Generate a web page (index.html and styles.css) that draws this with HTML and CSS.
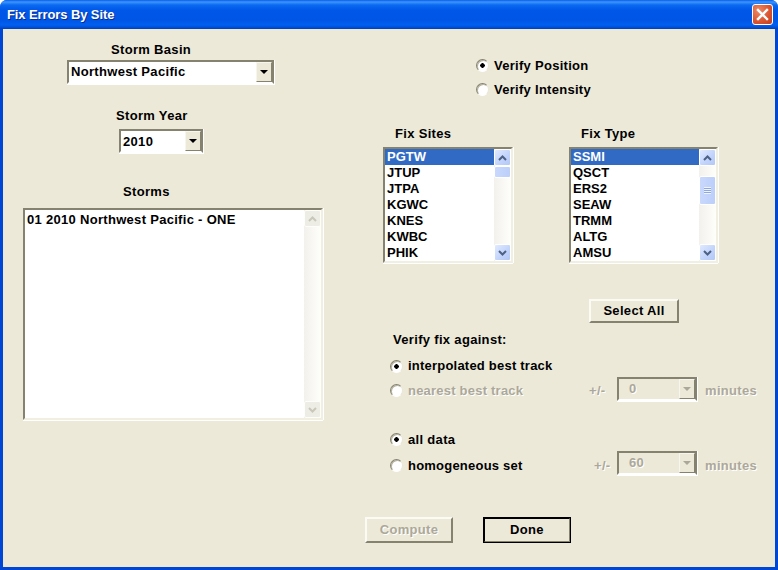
FILE: index.html
```html
<!DOCTYPE html>
<html lang="en">
<head>
<meta charset="utf-8">
<title>Fix Errors By Site</title>
<link rel="stylesheet" href="styles.css">
</head>
<body>
<div class="window">
  <div class="titlebar">
    <span class="title">Fix Errors By Site</span>
    <span class="close"><svg width="13" height="13" viewBox="0 0 13 13"><path d="M2 2 L11 11 M11 2 L2 11" stroke="#fff" stroke-width="2.4" stroke-linecap="square" fill="none"/></svg></span>
  </div>
  <div class="client">
    <div class="left">
      <div class="label basin-label">Storm Basin</div>
      <div class="combo basin"><span class="combo-text">Northwest Pacific</span><span class="combo-btn"><i class="arrow"></i></span></div>
      <div class="label year-label">Storm Year</div>
      <div class="combo year"><span class="combo-text">2010</span><span class="combo-btn"><i class="arrow"></i></span></div>
      <div class="label storms-label">Storms</div>
      <div class="listbox storms">
        <div class="items"><div class="item">01 2010 Northwest Pacific - ONE</div></div>
        <div class="scrollbar off">
          <span class="sb-btn"><svg width="9" height="6" viewBox="0 0 9 6"><path d="M1 5 L4.500 1.500 L8 5" fill="none" stroke="#c9c7ba" stroke-width="2"/></svg></span>
          <span class="sb-track"></span>
          <span class="sb-btn"><svg width="9" height="6" viewBox="0 0 9 6"><path d="M1 1 L4.500 4.500 L8 1" fill="none" stroke="#c9c7ba" stroke-width="2"/></svg></span>
        </div>
      </div>
    </div>
    <div class="right">
      <div class="radio-row verify first"><i class="radio on"></i><span class="label verify-text">Verify Position</span></div>
      <div class="radio-row verify"><i class="radio"></i><span class="label verify-text">Verify Intensity</span></div>
      <div class="lists">
        <div class="list-col sites">
          <div class="label list-label">Fix Sites</div>
          <div class="listbox small">
            <div class="items">
              <div class="item sel">PGTW</div><div class="item">JTUP</div><div class="item">JTPA</div><div class="item">KGWC</div><div class="item">KNES</div><div class="item">KWBC</div><div class="item">PHIK</div>
            </div>
            <div class="scrollbar">
              <span class="sb-btn"><svg width="9" height="6" viewBox="0 0 9 6"><path d="M1 5 L4.500 1.500 L8 5" fill="none" stroke="#4d6185" stroke-width="2"/></svg></span>
              <span class="sb-track"><span class="thumb thumb-top"></span></span>
              <span class="sb-btn"><svg width="9" height="6" viewBox="0 0 9 6"><path d="M1 1 L4.500 4.500 L8 1" fill="none" stroke="#4d6185" stroke-width="2"/></svg></span>
            </div>
          </div>
        </div>
        <div class="list-col types">
          <div class="label list-label">Fix Type</div>
          <div class="listbox small">
            <div class="items">
              <div class="item sel">SSMI</div><div class="item">QSCT</div><div class="item">ERS2</div><div class="item">SEAW</div><div class="item">TRMM</div><div class="item">ALTG</div><div class="item">AMSU</div>
            </div>
            <div class="scrollbar">
              <span class="sb-btn"><svg width="9" height="6" viewBox="0 0 9 6"><path d="M1 5 L4.500 1.500 L8 5" fill="none" stroke="#4d6185" stroke-width="2"/></svg></span>
              <span class="sb-track"><span class="thumb thumb-mid"><i class="grip"></i></span></span>
              <span class="sb-btn"><svg width="9" height="6" viewBox="0 0 9 6"><path d="M1 1 L4.500 4.500 L8 1" fill="none" stroke="#4d6185" stroke-width="2"/></svg></span>
            </div>
          </div>
        </div>
      </div>
      <button class="btn select-all">Select All</button>
      <div class="label against">Verify fix against:</div>
      <div class="opt-row r1"><i class="radio on"></i><span class="label tight">interpolated best track</span></div>
      <div class="opt-row r2 disabled">
        <i class="radio"></i><span class="label opt-label tight">nearest best track</span>
        <span class="label pm pm1">+/-</span>
        <div class="combo small-combo"><span class="combo-text">0</span><span class="combo-btn"><i class="arrow"></i></span></div>
        <span class="label minutes">minutes</span>
      </div>
      <div class="opt-row r3"><i class="radio on"></i><span class="label all-data">all data</span></div>
      <div class="opt-row r4">
        <i class="radio"></i><span class="label opt-label tight">homogeneous set</span>
        <span class="dis-group">
          <span class="label pm pm2">+/-</span>
          <div class="combo small-combo"><span class="combo-text">60</span><span class="combo-btn"><i class="arrow"></i></span></div>
          <span class="label minutes">minutes</span>
        </span>
      </div>
      <div class="actions">
        <button class="btn compute" disabled>Compute</button>
        <button class="btn done">Done</button>
      </div>
    </div>
  </div>
</div>
</body>
</html>
```
FILE: styles.css
```css
* { box-sizing: border-box; }
html, body { margin: 0; padding: 0; }
body {
  width: 778px;
  height: 570px;
  overflow: hidden;
  background: #fff;
  font: bold 13px/16px "Liberation Sans", Arial, sans-serif;
  color: #000;
}
.window {
  width: 778px;
  height: 570px;
  display: flex;
  flex-direction: column;
  background: #0046d5;
  border-radius: 7px 7px 0 0;
  overflow: hidden;
}
.titlebar {
  flex: none;
  height: 29px;
  display: flex;
  align-items: center;
  justify-content: space-between;
  padding: 0 5px 0 7px;
  background: linear-gradient(180deg, #0a5ce6 0, #3d95ff 2px, #0a6af0 5px, #0058e8 10px, #0055e5 20px, #0060f0 25px, #0050dc 27px, #0040b8 29px);
}
.title {
  color: #fff;
  font-size: 13px;
  text-shadow: 1px 1px 0 #0a2f8c;
  letter-spacing: -.1px;
}
.close {
  width: 21px;
  height: 21px;
  border: 1px solid #fff;
  border-radius: 3px;
  display: flex;
  align-items: center;
  justify-content: center;
  background: radial-gradient(circle at 30% 30%, #ec8a66, #d9532e 60%, #c23d1c);
}
.client {
  flex: 1;
  margin: 0 3px 3px;
  background: #ece9d8;
  display: flex;
  letter-spacing: .32px;
}
.left {
  width: 340px;
  flex: none;
  display: flex;
  flex-direction: column;
  align-items: flex-start;
}
.right {
  flex: 1;
  display: flex;
  flex-direction: column;
  align-items: flex-start;
}
.label { white-space: nowrap; }
.basin-label { margin: 13px 0 2px 108px; }
.year-label { margin: 24px 0 5px 113px; }
.storms-label { margin: 31px 0 8px 120px; }

.combo {
  display: flex;
  height: 24px;
  background: #fff;
  border: 2px solid;
  border-color: #85826f #85826f #fff #85826f;
  box-shadow: 1px 0 0 #fff, 0 1px 0 #fff, 1px 1px 0 #fff;
}
.basin { width: 207px; margin-left: 64px; }
.year { width: 84px; margin-left: 116px; }
.year .combo-text { padding-top: 3px; }
.combo-text { flex: 1; padding: 2px 0 0 2px; }
.combo-btn {
  flex: none;
  width: 16px;
  display: flex;
  align-items: center;
  justify-content: center;
  background: #ece9d8;
  border: 1px solid;
  border-color: #f6f5ee #85826f #85826f #f6f5ee;
}
.arrow {
  width: 0;
  height: 0;
  border-style: solid;
  border-width: 4px 4px 0;
  border-color: #000 transparent transparent;
}

.listbox {
  display: flex;
  background: #fff;
  border: 2px solid;
  border-color: #85826f #f1efe2 #f1efe2 #85826f;
  box-shadow: 1px 0 0 #fff, 0 1px 0 #fff;
}
.storms { width: 300px; height: 212px; margin-left: 20px; }
.small { height: 116px; }
.items { flex: 1; min-width: 0; }
.item { height: 16px; padding-left: 2px; white-space: nowrap; letter-spacing: 0; }
.storms .item { padding-top: 2px; height: 18px; letter-spacing: .3px; }
.sel { background: #316ac5; color: #fff; }

.scrollbar {
  width: 17px;
  flex: none;
  display: flex;
  flex-direction: column;
  background: linear-gradient(90deg, #f3f1ec, #fefefb);
}
.sb-btn {
  flex: none;
  height: 17px;
  display: flex;
  align-items: center;
  justify-content: center;
  border: 1px solid #fff;
  border-radius: 2px;
  background: linear-gradient(135deg, #e1eafe, #c1d3fb 60%, #b4c8f6);
}
.off .sb-btn { background: #eeede5; border-color: #fdfdf9; }
.sb-track { flex: 1; display: block; }
.thumb {
  display: flex;
  align-items: center;
  justify-content: center;
  width: 17px;
  border: 1px solid #fff;
  border-radius: 2px;
  background: linear-gradient(90deg, #c9d8fc, #bccffa);
}
.thumb-top { height: 12px; }
.thumb-mid { height: 29px; margin-top: 10px; }
.grip {
  display: block;
  width: 7px;
  height: 7px;
  background: repeating-linear-gradient(180deg, #eef3fe 0 1px, #8ea8df 1px 2px);
}

.radio {
  display: block;
  flex: none;
  width: 13px;
  height: 13px;
  border-radius: 50%;
  background: #fff;
  border: 1px solid;
  border-color: #85826f #e8e6da #fff #85826f;
  box-shadow: inset 1px 1px 0 #b5b2a0;
}
.radio.on { background: radial-gradient(circle, #000 0 2px, #fff 2.500px); }

.radio-row { display: flex; align-items: center; height: 16px; gap: 5px; }
.verify { margin: 8px 0 0 133px; }
.verify.first { margin-top: 28px; }
.verify-text { padding-top: 1px; letter-spacing: .28px; }

.lists { display: flex; margin: 29px 0 0 40px; }
.list-col { display: flex; flex-direction: column; }
.sites { width: 186px; }
.list-label { margin: 0 0 5px 12px; }
.sites .listbox { width: 130px; }
.types .listbox { width: 149px; }

.btn {
  display: block;
  font: inherit;
  letter-spacing: inherit;
  color: #000;
  background: #ece9d8;
  border: 2px solid;
  border-color: #fbfaf5 #85826f #85826f #fbfaf5;
  padding: 0;
}
.select-all { width: 90px; height: 24px; margin: 36px 0 0 246px; }
.against { margin: 9px 0 0 50px; }

.opt-row { display: flex; align-items: center; height: 24px; margin-left: 47px; }
.opt-row .radio { margin-right: 5px; }
.tight { letter-spacing: .22px; }
.r1 { margin-top: 6px; }
.r3 { margin-top: 25px; }
.r4 { margin-top: 2px; }
.opt-label { width: 181px; }
.r4 .opt-label { width: 186px; }
.opt-label, .pm, .minutes, .all-data { padding-top: 1px; }
.pm { width: 28px; }
.pm2 { width: 23px; }
.small-combo {
  width: 80px;
  margin-right: 8px;
  background: #ece9d8;
}
.r2 .small-combo { margin-bottom: 2px; }
.r4 .small-combo { margin-bottom: 4px; }
.small-combo .combo-text { padding-left: 10px; }
.small-combo .arrow { border-top-color: #aca899; }
.dis-group { display: flex; align-items: center; }
.dis-group .label, .disabled .label, .dis-group .combo-text, .disabled .combo-text { color: #aca899; text-shadow: 1px 1px 0 #fff; }

.actions { display: flex; gap: 30px; margin: 40px 0 0 22px; }
.actions .btn { width: 88px; height: 26px; }
.compute { color: #aca899; text-shadow: 1px 1px 0 #fff; }
.done { outline: 1px solid #000; outline-offset: -1px; border-color: #000 #85826f #85826f #000; }
```
